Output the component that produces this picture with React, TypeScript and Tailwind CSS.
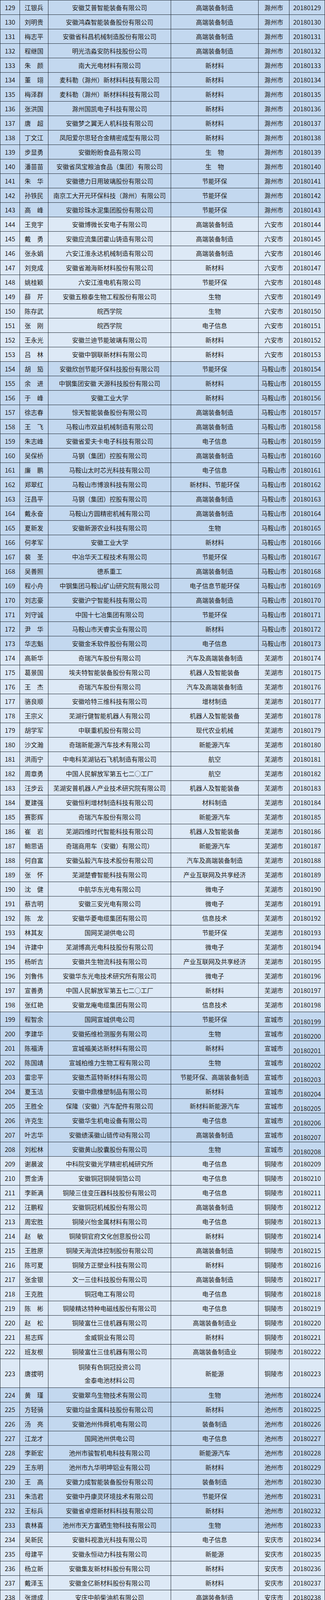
const groups: { city: string; dark: boolean; rows: string[] }[] = [
  {
    city: "滁州市",
    dark: true,
    rows: [
      "129|江银兵|安徽艾普智能装备有限公司|高端装备制造",
      "130|刘明贵|安徽鸿森智能装备股份有限公司|高端装备制造",
      "131|梅志平|安徽省科昌机械制造股份有限公司|高端装备制造",
      "132|程继国|明光浩淼安防科技股份公司|高端装备制造",
      "133|朱　颜|南大光电材料有限公司|新材料",
      "134|董　翊|麦科勒（滁州）新材料科技有限公司|新材料",
      "135|梅泽群|麦科勒（滁州）新材料科技有限公司|新材料",
      "136|张洪国|滁州国凯电子科技有限公司|新材料",
      "137|唐　超|安徽梦之翼无人机科技有限公司|新材料",
      "138|丁文江|凤阳爱尔思轻合金精密成型有限公司|新材料",
      "139|步显勇|安徽盼盼食品有限公司|生　物",
      "140|潘苗苗|安徽省凤宝粮油食品（集团）有限公司|生　物",
      "141|朱　华|安徽德力日用玻璃股份有限公司|节能环保",
      "142|孙铁民|南京工大开元环保科技（滁州）有限公司|节能环保",
      "143|高　峰|安徽珍珠水泥集团股份有限公司|节能环保",
    ],
  },
  {
    city: "六安市",
    dark: false,
    rows: [
      "144|王竞宇|安徽博微长安电子有限公司|高端装备制造",
      "145|戴　勇|安徽应流集团霍山铸造有限公司|高端装备制造",
      "146|张永娟|六安江淮永达机械制造有限公司|高端装备制造",
      "147|刘竞成|安徽省瀚海新材料股份有限公司|新材料",
      "148|姚桂颖|六安江淮电机有限公司|节能环保",
      "149|薛　芹|安徽五粮泰生物工程股份有限公司|生物",
      "150|陈存武|皖西学院|生物",
      "151|张　刚|皖西学院|电子信息",
      "152|王永光|安徽兰迪节能玻璃有限公司|新材料",
      "153|吕　林|安徽中钢联新材料有限公司|新材料",
    ],
  },
  {
    city: "马鞍山市",
    dark: true,
    rows: [
      "154|胡　笳|安徽欣创节能环保科技股份有限公司|节能环保",
      "155|余　进|中钢集团安徽 天源科技股份有限公司|新材料",
      "156|于　峰|安徽工业大学|新材料",
      "157|徐志春|惊天智能装备股份有限公司|高端装备制造",
      "158|王　飞|马鞍山市双益机械制造有限公司|高端装备制造",
      "159|朱志峰|安徽省爱夫卡电子科技有限公司|电子信息",
      "160|吴保桥|马钢（集团）控股有限公司|高端装备制造",
      "161|廉　鹏|马鞍山太时芯光科技有限公司|电子信息",
      "162|郑翠红|马鞍山市博浪科技有限公司|新材料、节能环保",
      "163|汪昌平|马钢（集团）控股有限公司|高端装备制造",
      "164|戴永奋|马鞍山方圆精密机械有限公司|高端装备制造",
      "165|夏新发|安徽新源农业科技有限公司|生物",
      "166|何孝军|安徽工业大学|新材料",
      "167|裴　圣|中冶华天工程技术有限公司|节能环保",
      "168|吴善照|德系重工|高端装备制造",
      "169|程小舟|中钢集团马鞍山矿山研究院有限公司|电子信息节能环保",
      "170|刘志豪|安徽沪宁智能科技有限公司|高端装备制造",
      "171|刘守诚|中国十七冶集团有限公司|节能环保",
      "172|尹　华|马鞍山市天睿实业有限公司|新材料",
      "173|华志魁|安徽金禾软件股份有限公司|电子信息",
    ],
  },
  {
    city: "芜湖市",
    dark: false,
    rows: [
      "174|高新华|奇瑞汽车股份有限公司|汽车及高端装备制造",
      "175|葛景国|埃夫特智能装备股份有限公司|机器人及智能装备",
      "176|王　杰|奇瑞汽车股份有限公司|汽车及高端装备制造",
      "177|骆良顺|安徽哈特三维科技有限公司|增材制造",
      "178|王宗义|芜湖行健智能机器人有限公司|机器人及智能装备",
      "179|胡学军|中联重机股份有限公司|现代农业机械",
      "180|沙文瀚|奇瑞新能源汽车技术有限公司|新能源汽车",
      "181|洪雨宁|中电科芜湖钻石飞机制造有限公司|航空",
      "182|周章勇|中国人民解放军第五七二○工厂|航空",
      "183|汪步云|芜湖安普机器人产业技术研究院有限公司|机器人及智能装备",
      "184|夏建强|安徽恒利增材制造科技有限公司|材料制造",
      "185|赛影辉|奇瑞汽车股份有限公司|新能源汽车",
      "186|崔　岩|芜湖四维时代智能科技有限公司|机器人及智能装备",
      "187|鲍思语|奇瑞商用车（安徽）有限公司）|新能源汽车",
      "188|何自富|安徽弘毅汽车技术股份有限公司|汽车及高端装备制造",
      "189|张　怀|芜湖楚睿智能科技有限公司|产业互联网及共享经济",
      "190|沈　健|中航华东光电有限公司|微电子",
      "191|蔡吉明|安徽三安光电有限公司|微电子",
      "192|陈　龙|安徽华菱电缆集团有限公司|信息技术",
      "193|林其友|国网芜湖供电公司|节能环保",
      "194|许建中|芜湖博高光电科技股份有限公司|微电子",
      "195|杨昕吉|安徽共生物流科技有限公司|产业互联网及共享经济",
      "196|刘鲁伟|安徽华东光电技术研究所有限公司|微电子",
      "197|宣善勇|中国人民解放军第五七二○工厂|新材料",
      "198|张红艳|安徽龙庵电缆集团有限公司|信息技术",
    ],
  },
  {
    city: "宣城市",
    dark: true,
    rows: [
      "199|程智余|国网宣城供电公司|节能环保",
      "200|李建华|安徽拓维检测服务有限公司|生物",
      "201|陈福涛|宣城福美达新材料有限公司|新材料",
      "202|陈国靖|宣城柏维力生物工程有限公司|生物",
      "203|雷忠平|安徽杰蓝特新材料有限公司|节能环保、高端装备制造",
      "204|夏玉洁|安徽中鼎橡塑制品有限公司|新材料",
      "205|王胜全|保隆（安徽）汽车配件有限公司|新材料新能源汽车",
      "206|许克生|安徽华生机电设备有限公司|电子信息",
      "207|叶志华|安徽绩溪徽山链传动有限公司|高端装备制造",
      "208|刘松林|安徽黄山胶囊股份有限公司|生物",
    ],
  },
  {
    city: "铜陵市",
    dark: false,
    rows: [
      "209|谢晨波|中科院安徽光学精密机械研究所|电子信息",
      "210|贾金涛|安徽铜冠铜陵铜箔公司|电子信息",
      "211|李新满|铜陵三佳变压器科技股份有限公司|电子信息",
      "212|汪鹏程|安徽铜冠机械股份有限公司|高端装备制造",
      "213|周宏胜|铜陵兴怡金属材料有限公司|电子信息",
      "214|赵　敏|铜陵铜官府文化创意股份公司|新材料",
      "215|王胜原|铜陵天海流体控制股份有限公司|高端装备制造",
      "216|陈可夏|铜陵方正塑业科技有限公司|新材料",
      "217|张金银|文一三佳科技股份有限公司|高端装备制造",
      "218|王克胜|铜冠电工有限公司|电子信息",
      "219|陈　彬|铜陵精达特种电磁线股份有限公司|电子信息",
      "220|赵　松|铜陵富仕三佳机器有限公司|高端装备制造业",
      "221|易志辉|金威铜业有限公司|新材料",
      "222|班友根|铜陵富仕三佳机器有限公司|高端装备制造业",
      "223|唐拔明|铜陵有色铜冠投资公司\n金泰电池材料公司|新能源",
    ],
  },
  {
    city: "池州市",
    dark: true,
    rows: [
      "224|黄　瑾|安徽翠鸟生物技术有限公司|生物",
      "225|方轻骑|安徽均益金属科技股份有限公司|新材料",
      "226|汤　亮|安徽池州伟舜机电有限公司|装备制造",
      "227|江龙才|国网池州供电公司|电子信息",
      "228|李新宏|池州市骏智机电科技有限公司|新能源汽车",
      "229|王东明|池州市九华明坤铝业有限公司|新材料",
      "230|王　高|安徽力成智能装备股份有限公司|装备制造",
      "231|朱浩君|安徽中丹康灵环境技术有限公司|节能环保",
      "232|王标兵|安徽省卓煜新材料科技有限公司|新材料",
      "233|袁林喜|池州市天方富硒生物科技有限公司|生物",
    ],
  },
  {
    city: "安庆市",
    dark: false,
    rows: [
      "234|吴新民|安徽科视激光科技有限公司|电子信息",
      "235|母建平|安徽永恒动力科技有限公司|新能源",
      "236|杨立新|安徽集友新材料股份有限公司|新材料",
      "237|戴泽玉|安徽金亿新材料股份有限公司|新材料",
      "238|张增成|安庆中船柴油机有限公司|高端装备制造",
      "239|汪秀春|安庆市嘉欣医疗用品科技股份有限公司|新材料",
      "240|柯　锐|安徽科浦环保科技有限公司|节能环保",
      "241|陆克平|中国石化安庆分公司|节能环保",
      "242|朱新生|安徽美捷威通生物科技有限公司|生物",
      "243|张小顺|安徽海康药业有限责任公司|生物",
    ],
  },
  {
    city: "黄山市",
    dark: true,
    rows: [
      "244|刘建哲|黄山博蓝特半导体科技有限公司|电子信息",
      "245|张奇志|黄山市万邦电子科技有限公司|电子信息",
      "246|余锦东|黄山市亿利工贸有限公司|电子信息",
      "247|王　健|黄山天之都环境科技发展有限公司|节能环保",
      "248|汪洪峰|黄山三佳谊华精密机械有限公司|高端装备制造",
      "249|王正成|昌辉汽车电器（黄山）股份公司|节能与新能源汽车",
      "250|潘国荣|黄山华惠科技有限公司|新材料",
    ],
  },
];

const CELL =
  "flex items-center justify-center overflow-hidden whitespace-nowrap border-b border-r border-[#1d2630] text-center";
const DARK = "bg-[#c3d8ef]";
const LIGHT = "bg-[#dde9f6]";
const TALL = "row-span-2";

function Row({ line, city, dark }: { line: string; city: string; dark: boolean }) {
  const [no, name, company, field] = line.split("|");
  const lines = company.split("\n");
  const bg = dark ? DARK : LIGHT;
  const span = lines.length > 1 ? TALL : "";
  const c = `${CELL} ${bg} ${span}`;

  return (
    <>
      <div className={`${c} border-l`}>{no}</div>
      <div className={c}>{name}</div>
      <div className={`${c} flex-col leading-[34px]`}>
        {lines.map((t) => (
          <span key={t}>{t}</span>
        ))}
      </div>
      <div className={c}>{field}</div>
      <div className={c}>{city}</div>
      <div className={city === "宣城市" ? `${c} pt-3` : c}>{`2018${no.padStart(4, "0")}`}</div>
    </>
  );
}

export default function App() {
  return (
    <div className="h-[4552px] w-[832px] overflow-hidden bg-white">
      <div className="grid w-[832px] grid-cols-[51px_73px_314px_224px_79px_91px] auto-rows-[37px] border-t border-[#1d2630] font-['Noto_Sans_CJK_SC',sans-serif] text-[16px] leading-[22px] text-[#1b1b1b]">
        {groups.map((g) =>
          g.rows.map((r) => <Row key={r} line={r} city={g.city} dark={g.dark} />)
        )}
      </div>
    </div>
  );
}
